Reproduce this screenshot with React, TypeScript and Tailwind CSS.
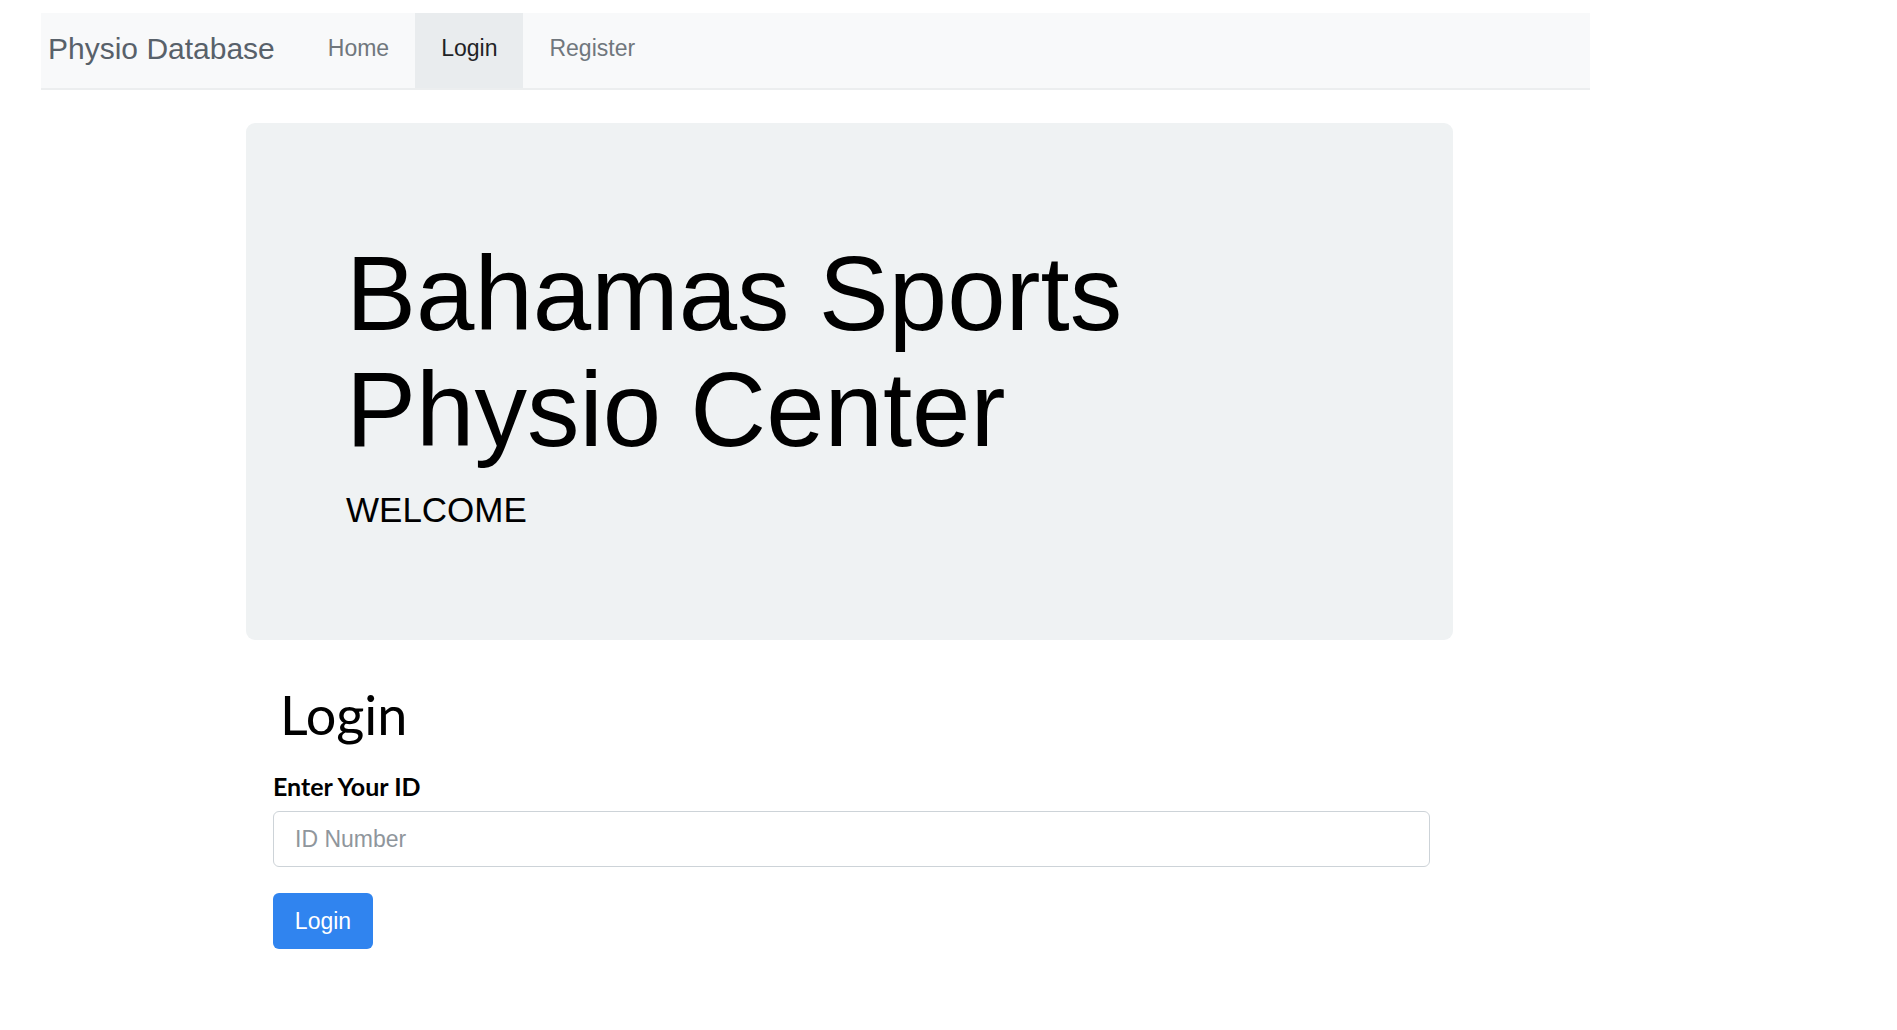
import React from "react";

const arial = { fontFamily: '"Liberation Sans", Arial, sans-serif' } as const;

export default function App() {
  return (
    <div className="min-h-[1030px] w-full bg-white font-['Liberation_Sans',Arial,sans-serif]">
      {/* Navbar */}
      <nav className="ml-[41px] mt-[13px] flex h-[77px] w-[1549px] items-stretch border-b-2 border-[#eceeef] bg-[#f8f9fa]">
        <a className="mr-[27px] flex items-center pb-[4px] pl-[7px] text-[30px] leading-none text-[#58616a]">
          Physio Database
        </a>
        <a className="flex items-center px-[26px] pb-[4px] text-[23px] leading-none text-[#70777d]">Home</a>
        <a className="flex items-center bg-[#e9ecee] px-[26px] pb-[4px] text-[23px] leading-none text-[#1f2326]">Login</a>
        <a className="flex items-center px-[26px] pb-[4px] text-[23px] leading-none text-[#70777d]">Register</a>
      </nav>

      <main className="ml-[246px] w-[1207px]">
        {/* Jumbotron */}
        <section className="mt-[33px] rounded-[9px] bg-[#eff2f3] pb-[104px] pl-[100px] pr-[40px] pt-[113px]">
          <h1 className="text-[105px] font-normal leading-[116px] text-black" style={arial}>
            Bahamas Sports
            <br />
            Physio Center
          </h1>
          <p className="mt-[16px] text-[35px] leading-[52px] text-black" style={arial}>
            WELCOME
          </p>
        </section>

        {/* Login form */}
        <section className="pl-[27px] pr-[23px]">
          <h2 className="mt-[43px] pl-[7px] font-['Lato',sans-serif] text-[54px] font-normal leading-[63px] text-black">
            Login
          </h2>
          <label className="mt-[22px] block font-['Lato',sans-serif] text-[25px] font-bold leading-[36px] text-black">
            Enter Your ID
          </label>
          <input
            type="text"
            placeholder="ID Number"
            className="mt-[7px] block h-[56px] w-full rounded-[6px] border-[1.5px] border-[#cdd3d8] bg-white px-[21px] text-[23px] text-[#495057] outline-none placeholder:text-[#8f969c]"
            style={arial}
          />
          <button
            className="mt-[26px] flex h-[56px] w-[100px] items-center justify-center rounded-[6px] bg-[#3084ef] text-[23px] text-white"
            style={arial}
          >
            Login
          </button>
        </section>
      </main>
    </div>
  );
}
